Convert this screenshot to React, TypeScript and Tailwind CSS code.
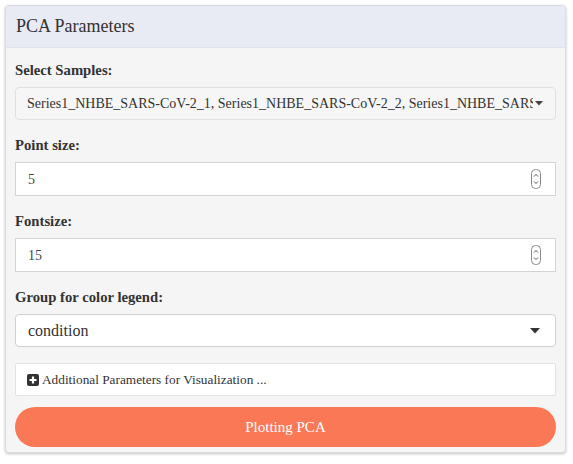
function Spinner() {
  return (
    <svg width="10" height="20" viewBox="0 0 10 20" className="shrink-0">
      <rect x="0.5" y="0.5" width="9" height="19" rx="4" fill="#fff" stroke="#8a8a8a" />
      <path d="M3 7.5 L5 5.5 L7 7.5" fill="none" stroke="#555" strokeWidth="1" />
      <path d="M3 12.5 L5 14.5 L7 12.5" fill="none" stroke="#555" strokeWidth="1" />
    </svg>
  );
}

function Label({ children }: { children: React.ReactNode }) {
  return <div className="h-5 mb-[7px] text-[14.7px] leading-5 font-bold text-[#333]">{children}</div>;
}

function NumberInput({ value }: { value: string }) {
  return (
    <div className="h-[34px] flex items-center justify-between bg-white border border-[#d3d3d8] pl-[12px] pr-[14px] text-[14px] text-[#444]">
      <span>{value}</span>
      <Spinner />
    </div>
  );
}

export default function App() {
  return (
    <div className="w-[573px] h-[464px] bg-white pt-[5px] pl-[5px] font-['Liberation_Serif','DejaVu_Serif',serif]">
      <div className="w-[561px] h-[448px] bg-[#f5f5f5] border border-[#dcdde3] rounded-[4px] shadow-[0_1px_3px_rgba(0,0,0,0.25)] overflow-hidden">
        <div className="h-[42px] bg-[#e8eaf4] border-b border-[#e1e3ec] flex items-center pl-[10px] text-[18px] text-[#333]">
          PCA Parameters
        </div>
        <div className="px-[9px] pt-[12px]">
          <Label>Select Samples:</Label>
          <div className="h-[33px] flex items-center justify-between bg-[#f6f6f6] border border-[#e0e0e0] rounded-[4px] pl-[11px] pr-[12px] text-[14px] text-[#333]">
            <span className="whitespace-nowrap overflow-hidden w-[512px]">
              Series1_NHBE_SARS-CoV-2_1, Series1_NHBE_SARS-CoV-2_2, Series1_NHBE_SARS-CoV-2_3
            </span>
            <svg width="8" height="5" viewBox="0 0 8 5" className="shrink-0 ml-[2px]">
              <path d="M0 0 H8 L4 4.5 Z" fill="#444" />
            </svg>
          </div>

          <div className="mt-[15px]">
            <Label>Point size:</Label>
            <NumberInput value="5" />
          </div>

          <div className="mt-[15px]">
            <Label>Fontsize:</Label>
            <NumberInput value="15" />
          </div>

          <div className="mt-[15px]">
            <Label>Group for color legend:</Label>
            <div className="h-[33px] flex items-center justify-between bg-white border border-[#cfcfd4] rounded-[4px] pl-[12px] pr-[15px] text-[16px] text-[#333]">
              <span>condition</span>
              <svg width="10" height="6" viewBox="0 0 10 6">
                <path d="M0 0 H10 L5 5.5 Z" fill="#333" />
              </svg>
            </div>
          </div>

          <div className="mt-[16px] h-[33px] flex items-center bg-white border border-[#e2e2e2] rounded-[2px] pl-[11px] text-[13.3px] text-[#333]">
            <svg width="12" height="12" viewBox="0 0 12 12" className="mr-[3px]">
              <rect x="0" y="0" width="12" height="12" rx="2" fill="#333" />
              <path d="M6 2.5 V9.5 M2.5 6 H9.5" stroke="#fff" strokeWidth="2.2" />
            </svg>
            <span>Additional Parameters for Visualization ...</span>
          </div>

          <div className="mt-[11px] h-[40px] flex items-center justify-center rounded-full bg-[#fa7856] text-white text-[15px]">
            Plotting PCA
          </div>
        </div>
      </div>
    </div>
  );
}
